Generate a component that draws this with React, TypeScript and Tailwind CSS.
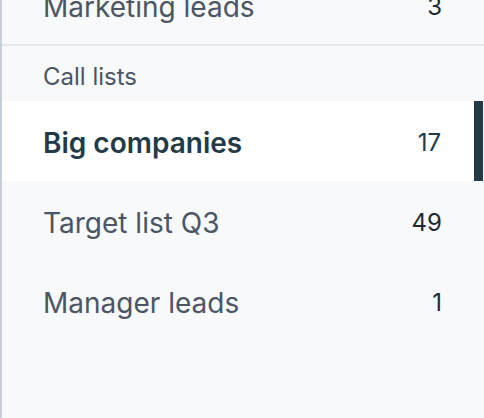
import React from "react";

const items = [
  { name: "Target list Q3", count: 49 },
  { name: "Manager leads", count: 1 },
];

export default function App() {
  return (
    <div
      className="w-[484px] h-[418px] overflow-hidden bg-[#f7f9fb] border-l-2 border-[#c7cfdb] flex flex-col"
      style={{ fontFamily: "Inter, 'Noto Sans', sans-serif" }}
    >
      <div className="mt-[-34px] h-[80px] shrink-0 flex items-center justify-between pt-[4px] pl-[41px] pr-[42px] border-b-2 border-[#e4e9ee]">
        <span className="text-[28px] text-[#4b5563]">Marketing leads</span>
        <span className="text-[24px] text-[#1f2933]">3</span>
      </div>
      <div className="h-[55px] shrink-0 flex items-center pt-[7px] pl-[41px]">
        <span className="text-[24px] text-[#4b5563]">Call lists</span>
      </div>
      <div className="h-[80px] shrink-0 flex items-center bg-white">
        <div className="flex-1 flex items-center justify-between pt-[4px] pl-[41px] pr-[33px]">
          <span className="text-[28px] font-semibold text-[#233a47]">Big companies</span>
          <span className="text-[24px] text-[#233a47]">17</span>
        </div>
        <div className="w-[9px] self-stretch bg-[#233a47]" />
        <div className="w-px self-stretch bg-[#f7f9fb]" />
      </div>
      {items.map((it) => (
        <div
          key={it.name}
          className="h-[80px] shrink-0 flex items-center justify-between pt-[4px] pl-[41px] pr-[42px]"
        >
          <span className="text-[28px] text-[#4b5563]">{it.name}</span>
          <span className="text-[24px] text-[#1f2933]">{it.count}</span>
        </div>
      ))}
    </div>
  );
}
